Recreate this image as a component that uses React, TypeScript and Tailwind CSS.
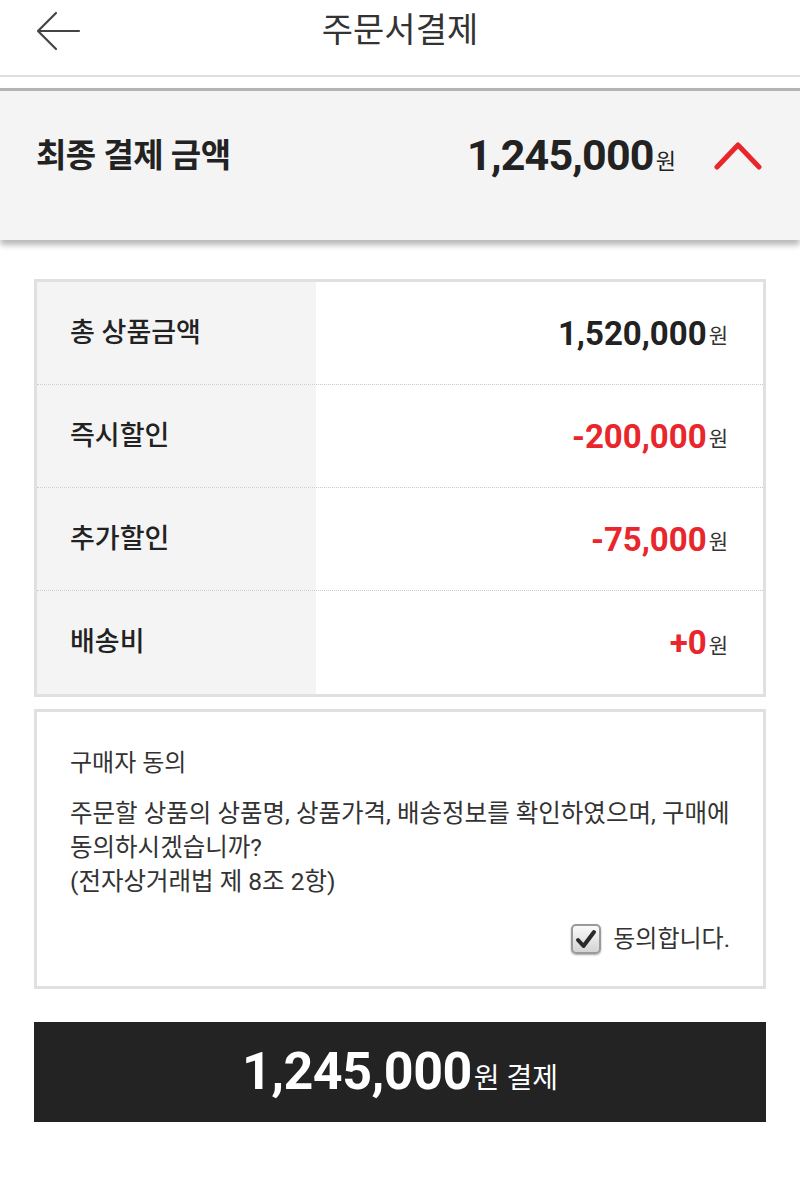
import React from 'react';

const rows = [
  { label: '총 상품금액', value: '1,520,000', red: false },
  { label: '즉시할인', value: '-200,000', red: true },
  { label: '추가할인', value: '-75,000', red: true },
  { label: '배송비', value: '+0', red: true },
];

function BackArrow() {
  return (
    <svg width="46" height="40" viewBox="0 0 46 40" fill="none">
      <path d="M44 20H3M21 2L3 20l18 18" stroke="#444" strokeWidth="2.2" strokeLinecap="round" strokeLinejoin="round" />
    </svg>
  );
}

function ChevronUp() {
  return (
    <svg width="48" height="30" viewBox="0 0 48 30" fill="none">
      <path d="M3 27L24 5l21 22" stroke="#e8262b" strokeWidth="5" strokeLinecap="round" strokeLinejoin="round" />
    </svg>
  );
}

function CheckBox() {
  return (
    <span className="w-[30px] h-[30px] rounded-[5px] border-2 border-[#9a9a9a] bg-gradient-to-b from-[#fafafa] to-[#d4d4d4] shadow-[0_1px_2px_rgba(0,0,0,0.35)] flex items-center justify-center">
      <svg width="22" height="20" viewBox="0 0 22 20" fill="none">
        <path d="M3 11l5.5 6L19 3" stroke="#2a2a2a" strokeWidth="4" strokeLinecap="round" strokeLinejoin="round" />
      </svg>
    </span>
  );
}

export default function App() {
  return (
    <div className="w-[800px] min-h-[1194px] bg-white font-['Roboto','Noto_Sans_CJK_KR',sans-serif] text-[#222]">
      {/* Header */}
      <header className="relative h-[77px] border-b-2 border-[#dedede]">
        <button className="absolute left-[35px] top-[11px]" aria-label="back">
          <BackArrow />
        </button>
        <h1 className="h-[60px] flex items-center justify-center text-[34px] leading-none text-[#333] font-normal">
          주문서결제
        </h1>
      </header>

      {/* Final amount */}
      <section className="mt-[11px] h-[152px] bg-[#f4f4f4] border-t-[3px] border-[#b4b4b4] shadow-[0_5px_6px_rgba(0,0,0,0.28)] flex items-center justify-between pl-[36px] pr-[38px] pb-[20px]">
        <span className="text-[33px] font-bold tracking-[-0.5px]">최종 결제 금액</span>
        <div className="flex items-center">
          <span className="text-[43px] font-bold leading-none tracking-[-0.8px]">1,245,000</span>
          <span className="text-[22px] ml-[2px] mt-[12px]">원</span>
          <span className="ml-[38px] mt-[-2px]">
            <ChevronUp />
          </span>
        </div>
      </section>

      {/* Breakdown */}
      <div className="mx-[34px] mt-[39px] border-[3px] border-[#e0e0e0]">
        {rows.map((r, i) => (
          <div
            key={r.label}
            className={`flex h-[103px] ${i < rows.length - 1 ? 'border-b border-dotted border-[#c8c8c8]' : ''}`}
          >
            <div className="w-[279px] bg-[#f4f4f4] flex items-center pl-[33px] text-[27px] font-medium">
              {r.label}
            </div>
            <div className={`flex-1 flex items-center justify-end pr-[35px] ${r.red ? 'text-[#e8262b]' : 'text-[#222]'}`}>
              <span className="text-[33px] font-bold leading-none">{r.value}</span>
              <span className="text-[21px] ml-[2px] mt-[8px] text-[#333]">원</span>
            </div>
          </div>
        ))}
      </div>

      {/* Agreement */}
      <div className="mx-[34px] mt-[12px] border-[3px] border-[#e0e0e0] px-[33px] pt-[34px] pb-[30px] text-[#333]">
        <p className="text-[24px] leading-[34px]">구매자 동의</p>
        <p className="mt-[17px] text-[24.5px] leading-[34px] whitespace-nowrap">
          주문할 상품의 상품명, 상품가격, 배송정보를 확인하였으며, 구매에
          <br />
          동의하시겠습니까?
          <br />
          (전자상거래법 제 8조 2항)
        </p>
        <label className="mt-[23px] flex items-center justify-end gap-[12px] h-[34px]">
          <CheckBox />
          <span className="text-[24px]">동의합니다.</span>
        </label>
      </div>

      {/* Pay button */}
      <button className="mx-[34px] mt-[33px] w-[732px] h-[100px] bg-[#232323] text-white flex items-center justify-center">
        <span className="text-[52px] font-bold leading-none tracking-[-0.5px]">1,245,000</span>
        <span className="text-[28px] ml-[2px] mt-[14px]">원 결제</span>
      </button>
    </div>
  );
}
